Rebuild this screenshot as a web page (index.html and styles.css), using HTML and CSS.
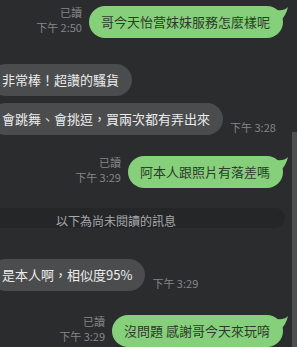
FILE: index.html
```html
<!DOCTYPE html>
<html>

<head>
    <title>聊天</title>
    <link rel="stylesheet" href="styles.css">
</head>

<body>
    <div class="chat">
        <div class="row out first">
            <div class="meta">
                <span>已讀</span>
                <span>下午 2:50</span>
            </div>
            <div class="bubble green">
                哥今天怡营妹妹服務怎麼樣呢
                <svg class="tail" width="12" height="14" viewBox="0 0 12 14"><path d="M0 3 Q7 4 11 0 Q9 9 3 14 Z" fill="#86d07b" /></svg>
            </div>
        </div>

        <div class="row in gap-big">
            <div class="bubble gray">非常棒！超讚的騷貨</div>
        </div>
        <div class="row in gap-small">
            <div class="bubble gray">會跳舞、會挑逗，買兩次都有弄出來</div>
            <div class="meta"><span>下午 3:28</span></div>
        </div>

        <div class="row out gap-mid">
            <div class="meta">
                <span>已讀</span>
                <span>下午 3:29</span>
            </div>
            <div class="bubble green">
                阿本人跟照片有落差嗎
                <svg class="tail" width="12" height="14" viewBox="0 0 12 14"><path d="M0 3 Q7 4 11 0 Q9 9 3 14 Z" fill="#86d07b" /></svg>
            </div>
        </div>

        <div class="divider">
            <span>以下為尚未閱讀的訊息</span>
        </div>

        <div class="row in gap-div">
            <div class="bubble gray">是本人啊，相似度95%</div>
            <div class="meta"><span>下午 3:29</span></div>
        </div>

        <div class="row out gap-last">
            <div class="meta">
                <span>已讀</span>
                <span>下午 3:29</span>
            </div>
            <div class="bubble green">
                沒問題 感謝哥今天來玩唷
                <svg class="tail" width="12" height="14" viewBox="0 0 12 14"><path d="M0 3 Q7 4 11 0 Q9 9 3 14 Z" fill="#86d07b" /></svg>
            </div>
        </div>
    </div>

    <div class="scrollbar">
        <div class="thumb"></div>
    </div>
</body>

</html>
```

FILE: styles.css
```css
body {
    background-color: #2b2c2e;
    font-family: "Noto Sans CJK TC", "Noto Sans", sans-serif;
    margin: 0;
    height: 347px;
    overflow: hidden;
    display: flex;
}

.chat {
    flex: 1;
    margin-left: -10px;
    padding-right: 9px;
    display: flex;
    flex-direction: column;
}

.row {
    display: flex;
    align-items: flex-end;
    gap: 7px;
}

.row.out {
    justify-content: flex-end;
}

.first {
    margin-top: 5px;
}

.gap-big {
    margin-top: 26px;
}

.gap-small {
    margin-top: 7px;
}

.gap-mid {
    margin-top: 20px;
}

.gap-div {
    margin-top: 31px;
}

.gap-last {
    margin-top: 23px;
}

.bubble {
    position: relative;
    height: 32px;
    line-height: 32px;
    padding: 0 13px 0 12px;
    border-radius: 16px;
    font-size: 13px;
    white-space: nowrap;
}

.green {
    background-color: #86d07b;
    color: #2e3a2c;
}

.gray {
    background-color: #4b4c4e;
    color: #ececec;
}

.tail {
    position: absolute;
    right: -6px;
    top: 1px;
}

.meta {
    display: flex;
    flex-direction: column;
    align-items: flex-end;
    font-size: 11px;
    line-height: 15px;
    color: #858688;
    margin-bottom: 3px;
}

.in .meta {
    margin-bottom: 0;
}

.divider {
    margin-top: 20px;
    height: 21px;
    background-color: #252628;
    border-radius: 0 10px 10px 0;
    margin-left: -43px;
    margin-right: -2px;
    text-align: center;
}

.divider span {
    display: block;
    font-size: 12px;
    line-height: 14px;
    padding-top: 6px;
    color: #a9aaac;
}

.scrollbar {
    width: 5px;
}

.scrollbar .thumb {
    margin-top: 132px;
    height: 215px;
    background-color: #4e4f51;
}
```
